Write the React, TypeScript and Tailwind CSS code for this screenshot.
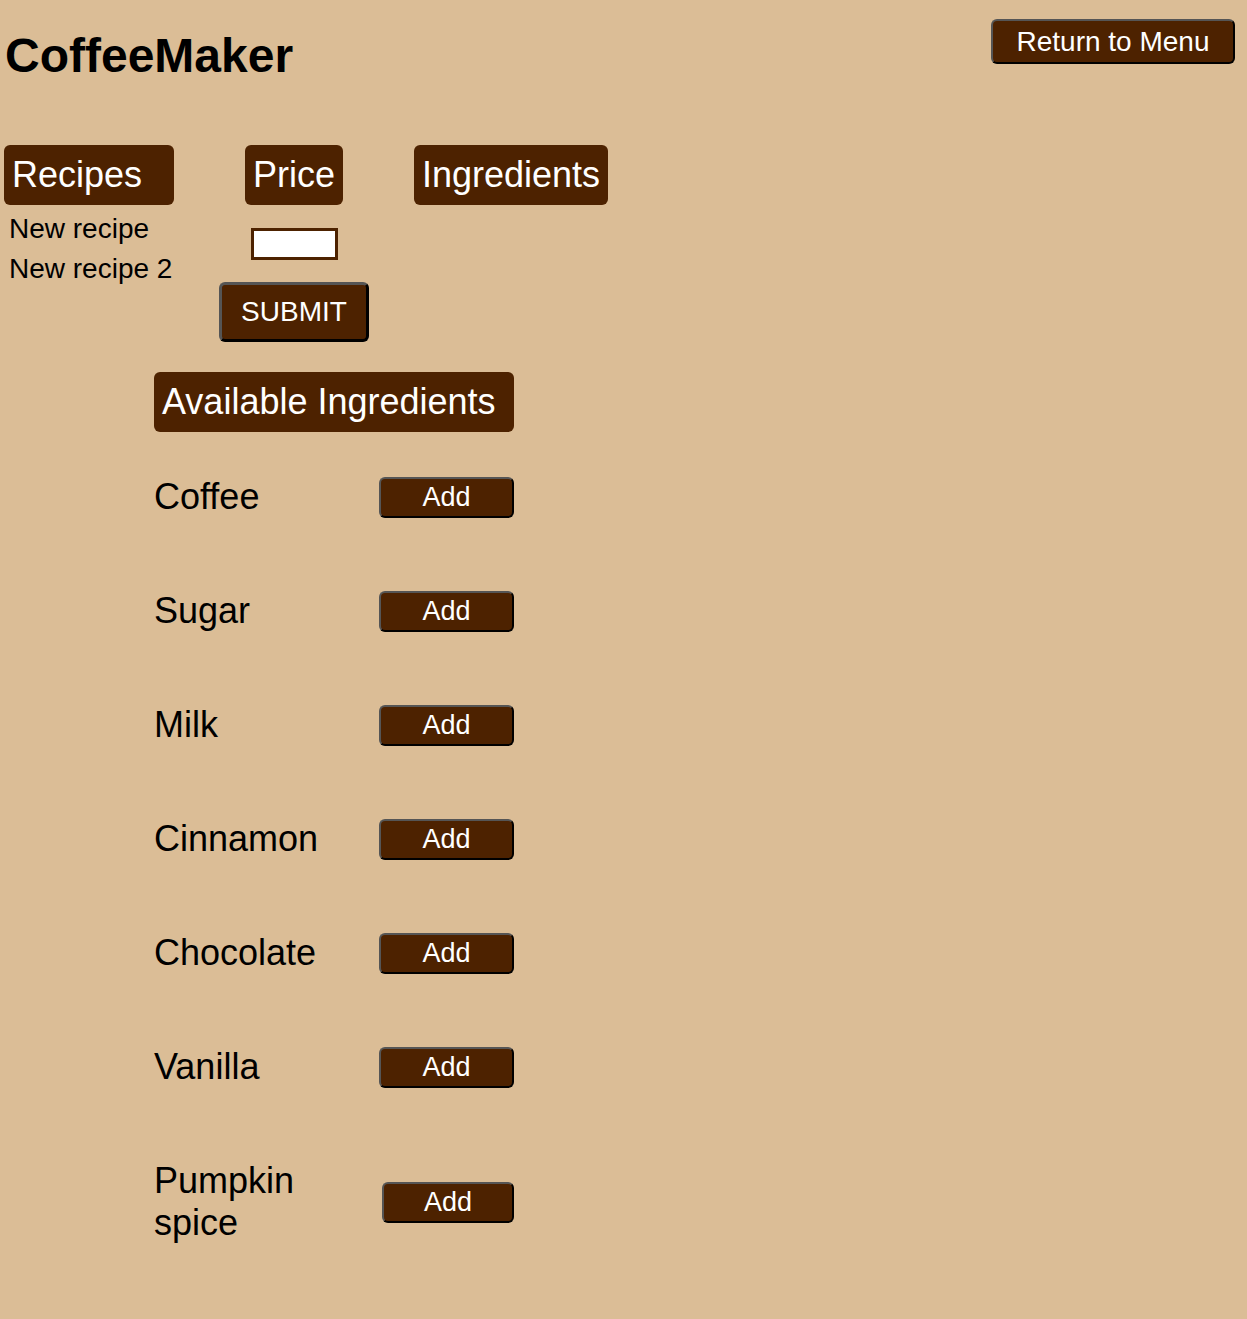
import React from 'react';

const RECIPES = ['New recipe', 'New recipe 2'];
const INGREDIENTS = ['Coffee', 'Sugar', 'Milk', 'Cinnamon', 'Chocolate', 'Vanilla', 'Pumpkin spice'];

const btn =
  'bg-[#4d2200] text-white rounded-[6px] border-2 border-t-[#555] border-l-[#555] border-b-black border-r-black';

export default function App() {
  return (
    <div className="min-h-[1319px] w-full bg-[#dbbd96] font-['Liberation_Sans',Arial,sans-serif] text-black">
      {/* Top bar */}
      <div className="flex items-start justify-between pr-[12px]">
        <h1 className="mt-[28px] ml-[5px] text-[48px] font-bold leading-[55px]">CoffeeMaker</h1>
        <button className={`${btn} mt-[19px] h-[45px] w-[244px] text-[28px] leading-none`}>Return to Menu</button>
      </div>

      {/* Columns */}
      <div className="mt-[62px] flex items-start gap-[45px] pl-[4px]">
        <div className="flex w-[170px] flex-col">
          <div className="flex h-[60px] items-center rounded-[6px] bg-[#4d2200] pl-[8px] text-[36px] text-white">
            Recipes
          </div>
          <ul className="mt-[4px] pl-[5px]">
            {RECIPES.map((r) => (
              <li key={r} className="whitespace-nowrap text-[28px] leading-[40px]">
                {r}
              </li>
            ))}
          </ul>
        </div>

        <div className="flex w-[150px] flex-col items-center">
          <div className="flex h-[60px] items-center rounded-[6px] bg-[#4d2200] px-[8px] text-[36px] text-white">
            Price
          </div>
          <input
            type="text"
            className="mt-[23px] h-[32px] w-[87px] border-[3px] border-[#4d2200] bg-white outline-none"
          />
          <button className={`${btn} mt-[22px] h-[60px] w-[150px] border-[3px] text-[28px] leading-none`}>
            SUBMIT
          </button>
        </div>

        <div className="flex h-[60px] items-center rounded-[6px] bg-[#4d2200] px-[8px] text-[36px] text-white">
          Ingredients
        </div>
      </div>

      {/* Available ingredients */}
      <div className="ml-[154px] mt-[30px] w-[360px]">
        <div className="flex h-[60px] items-center rounded-[6px] bg-[#4d2200] pl-[8px] text-[36px] text-white">
          Available Ingredients
        </div>
        <div className="mt-[8px] flex flex-col">
          {INGREDIENTS.map((name) => {
            const long = name === 'Pumpkin spice';
            return (
              <div key={name} className="flex items-center justify-between py-[36px]">
                <span className={`text-[36px] leading-[42px] ${long ? 'w-[200px]' : ''}`}>{name}</span>
                <button
                  className={`${btn} h-[41px] ${long ? 'w-[132px]' : 'w-[135px]'} text-[27px] leading-none`}
                >
                  Add
                </button>
              </div>
            );
          })}
        </div>
      </div>
    </div>
  );
}
